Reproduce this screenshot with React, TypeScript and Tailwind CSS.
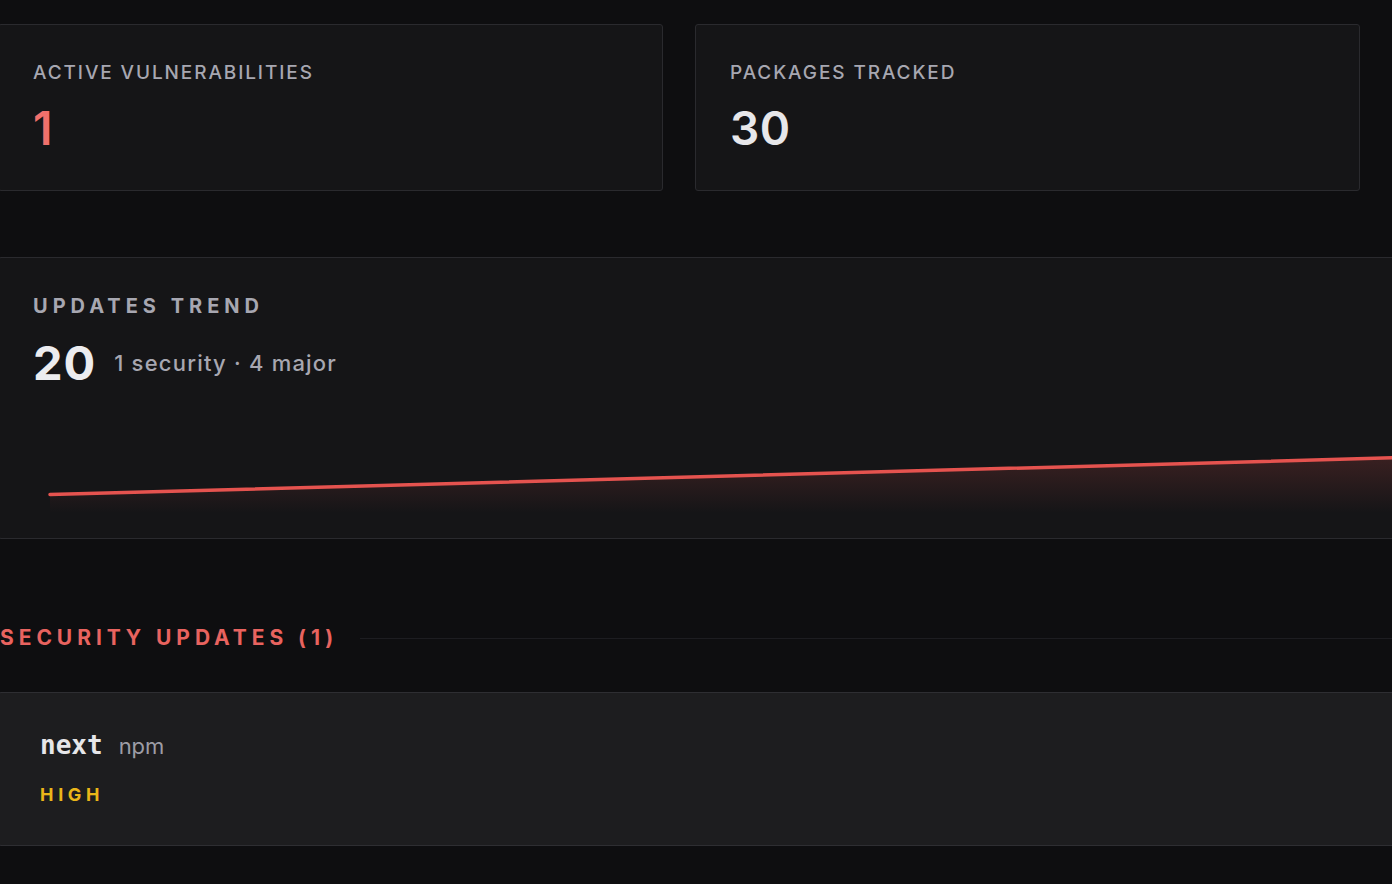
import React from 'react';

const stats = [
    { label: 'Active Vulnerabilities', value: '1', tone: 'text-[#f0706c]' },
    { label: 'Packages Tracked', value: '30', tone: 'text-[#e7e7ea]' },
];

const sans = "font-['Inter','Noto_Sans',sans-serif]";

function StatCard({ label, value, tone }: { label: string; value: string; tone: string }) {
    return (
        <div className="rounded-[3px] border border-[#2a2a2e] bg-[#151517] px-[34px] pt-[36px] pb-[35px]">
            <div className="text-[19px] leading-[24px] font-medium uppercase tracking-[0.1em] text-[#a7a7b1]">
                {label}
            </div>
            <div className={`mt-[17px] text-[46px] leading-[53px] font-semibold tracking-[0.01em] ${tone}`}>{value}</div>
        </div>
    );
}

function TrendChart() {
    // straight two-point series, drawn in pixel units
    const x0 = 17, y0 = 93.5;
    const x1 = 1420, y1 = 55.2;
    return (
        <svg width="1440" height="112" viewBox="0 0 1440 112" className="block">
            <defs>
                <linearGradient id="trendFill" gradientUnits="userSpaceOnUse" x1="0" y1="55" x2="0" y2="112">
                    <stop offset="0%" stopColor="#e5534f" stopOpacity="0.18" />
                    <stop offset="100%" stopColor="#e5534f" stopOpacity="0" />
                </linearGradient>
            </defs>
            <path d={`M${x0} ${y0} L${x1} ${y1} L${x1} 112 L${x0} 112 Z`} fill="url(#trendFill)" />
            <path d={`M${x0} ${y0} L${x1} ${y1}`} stroke="#e5534f" strokeWidth="3.5" strokeLinecap="round" fill="none" />
        </svg>
    );
}

export default function App() {
    return (
        <div className={`min-h-screen w-full overflow-hidden bg-[#0e0e10] ${sans}`}>
            <div className="-ml-[2px] flex w-[2756px] flex-col pt-[24px] pb-[40px]">

                {/* Summary stats */}
                <div className="grid grid-cols-[665px_665px] gap-[32px]">
                    {stats.map((s) => (
                        <StatCard key={s.label} {...s} />
                    ))}
                </div>

                {/* Updates trend */}
                <div className="mt-[66px] overflow-hidden rounded-[3px] border border-[#2a2a2e] bg-[#151517] px-[34px] pt-[34px] pb-[25px]">
                    <div className="text-[20px] leading-[28px] font-bold uppercase tracking-[0.25em] text-[#a7a7b1]">
                        Updates Trend
                    </div>
                    <div className="mt-[21px] flex items-center gap-[18px]">
                        <span className="text-[47px] leading-[44px] font-bold tracking-[0.02em] text-[#ececef]">20</span>
                        <span className="text-[22px] leading-[28px] font-medium tracking-[0.055em] text-[#a7a7b1]">1 security · 4 major</span>
                    </div>
                    <div className="mt-[16px]">
                        <TrendChart />
                    </div>
                </div>

                {/* Security updates */}
                <div className="mt-[85px] flex items-center gap-[22px] pl-[2px]">
                    <h3 className="text-[21px] leading-[28px] font-bold uppercase tracking-[0.235em] text-[#e8635f]">
                        Security Updates (1)
                    </h3>
                    <div className="h-px flex-1 bg-[#1d1d21]" />
                </div>

                <div className="mt-[40px] rounded-[3px] border border-[#2e2e32] bg-[#1d1d1f] px-[41px] pt-[36px] pb-[38px]">
                    <div className="flex items-baseline gap-[16px]">
                        <span className="font-['DejaVu_Sans_Mono','Liberation_Mono',monospace] text-[26px] leading-[32px] font-bold text-[#e6e6e9]">
                            next
                        </span>
                        <span className="text-[22px] leading-[32px] text-[#9d9da6]">npm</span>
                    </div>
                    <div className="mt-[21px] text-[18px] leading-[24px] font-bold uppercase tracking-[0.26em] text-[#eab619]">
                        High
                    </div>
                </div>
            </div>
        </div>
    );
}
